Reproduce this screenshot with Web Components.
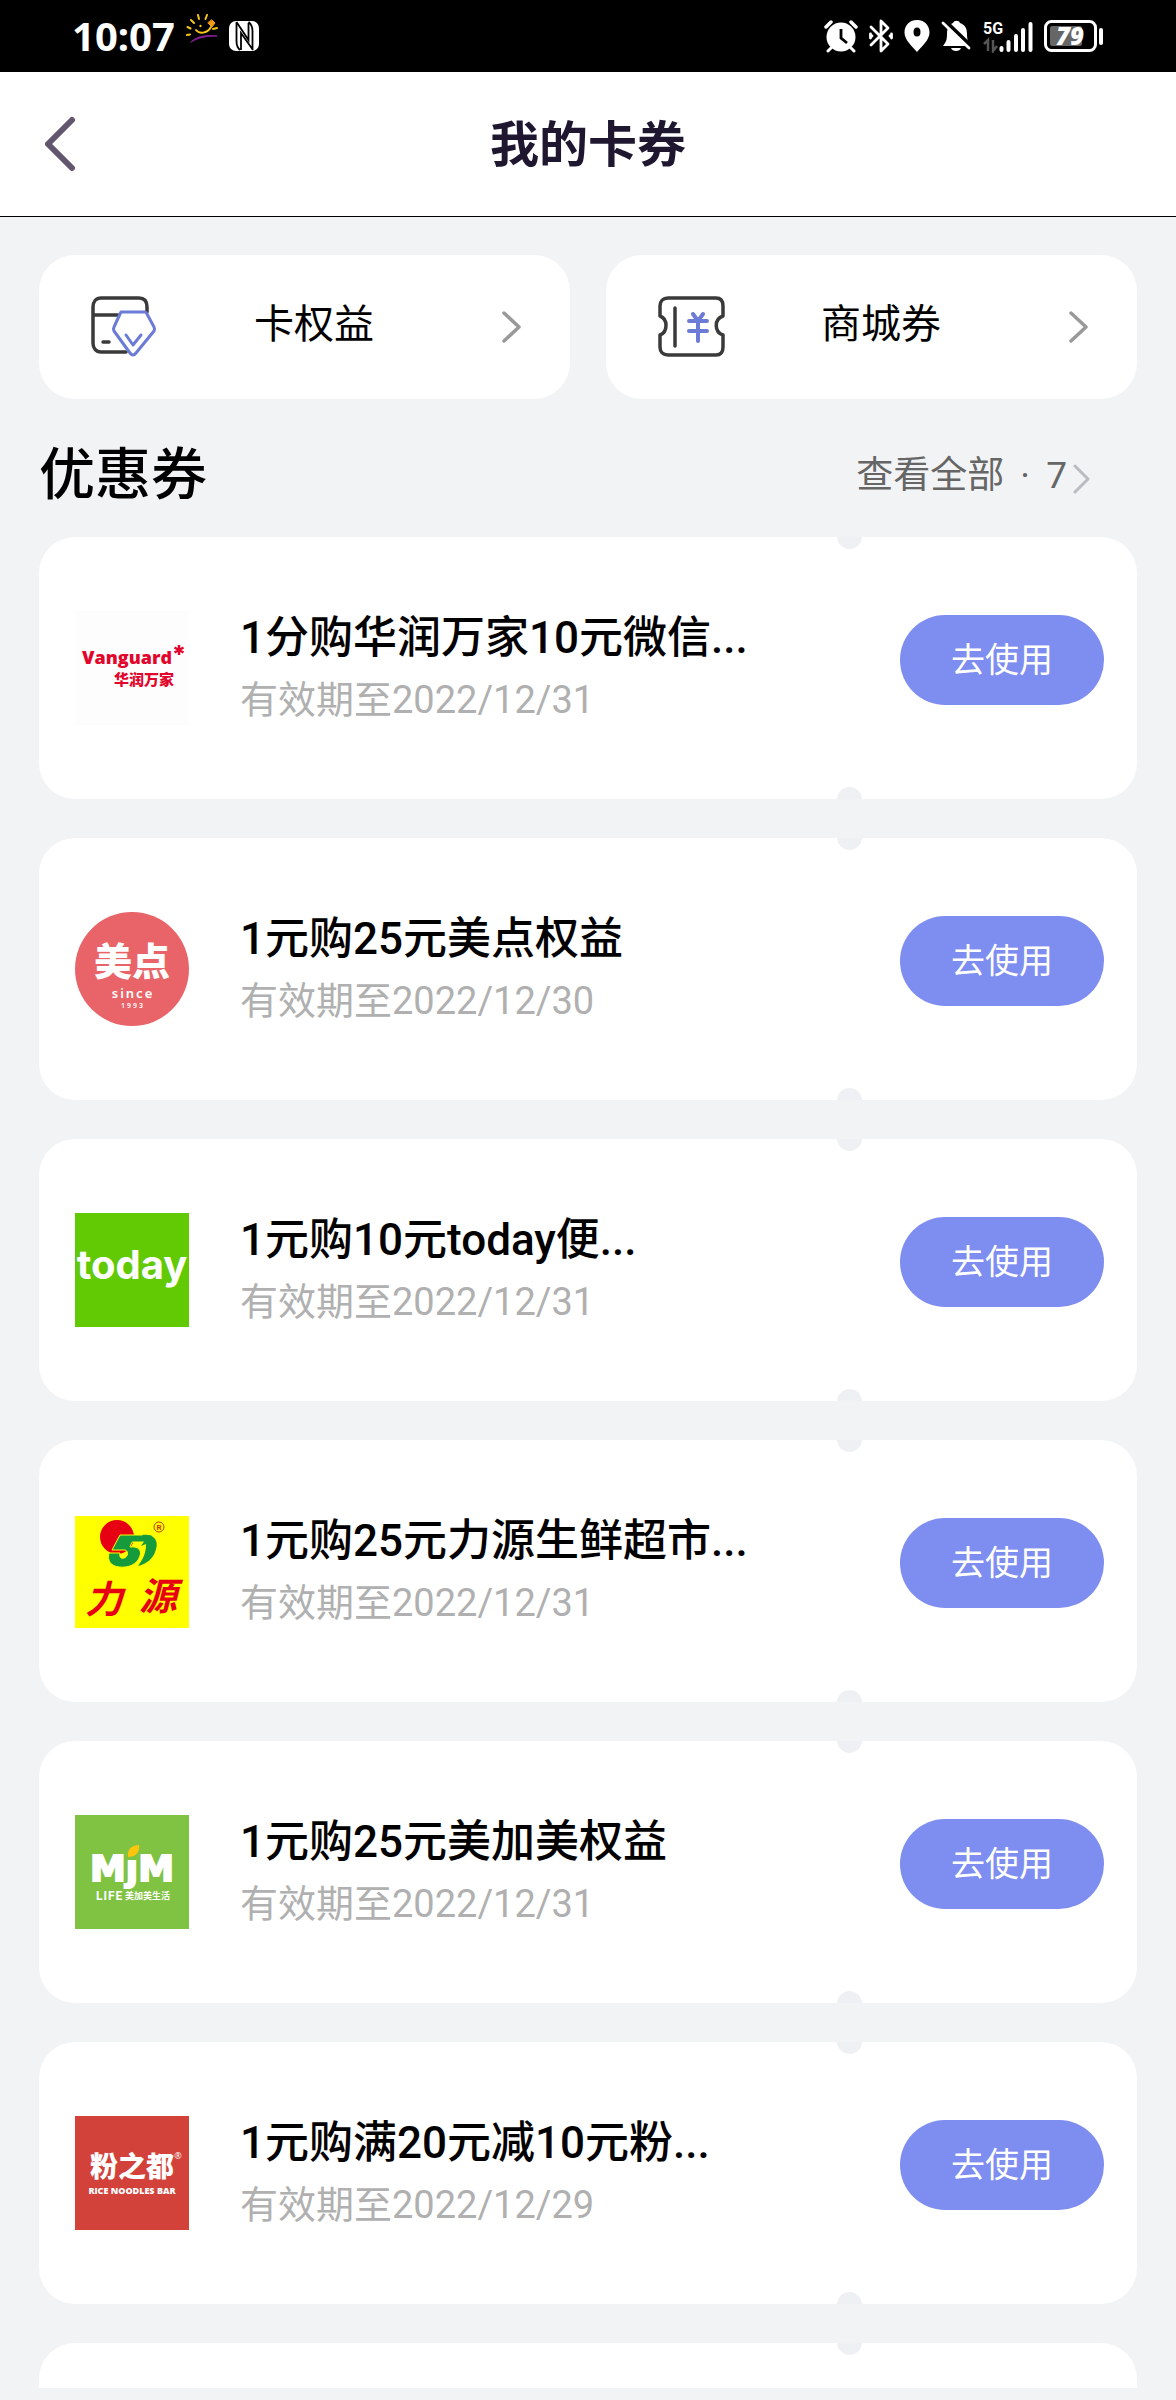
<!DOCTYPE html>
<html lang="zh-CN">
<head>
<meta charset="utf-8">
<meta name="viewport" content="width=device-width">
<title>我的卡券</title>
<style>
html,body{margin:0;height:100%}
body{background:#f2f3f5;color:#000;font-family:Roboto,"Noto Sans CJK SC",sans-serif}
</style>
</head>
<body>
<wallet-page></wallet-page>

<template id="status-bar">
<style>
:host{display:flex;align-items:center;justify-content:space-between;height:72px;padding:0 73px 0 72px;box-sizing:border-box;background:#000;color:#fff;flex:none}
.side{display:flex;align-items:center}
.left{gap:11px}
.right{gap:11px}
time{font:700 40px/72px "Noto Sans",sans-serif}
svg{display:block;flex:none}
.sun{margin-bottom:14px}
</style>
<div class="side left">
<time>10:07</time>
<svg class="sun" width="32" height="30" viewBox="0 0 32 30" fill="none" stroke="#f5c518" stroke-width="2" stroke-linecap="round"><path d="M1 21l3-.500M1.500 13l3 1.500M5 6l3 3M12 1l1 4M21 1l-1.500 4M27 15l4-1"/><path d="M10 16c3 4 11 4 15-3"/><path d="M22 9l4 4 3-4-3-3z" fill="#f59d18" stroke="#f59d18" stroke-width="1"/><circle cx="14.500" cy="12" r="1.200" fill="#f5c518" stroke="none"/><path d="M5 28c6-6 14-7 26-6-9 0-18 1-26 6z" fill="#8a1f9c" stroke="#8a1f9c" stroke-width="1"/></svg>
<svg width="30" height="30" viewBox="0 0 30 30"><rect width="30" height="30" rx="7" fill="#fff"/><path d="M7.500 1v19q0 6 3.500 9M12 29V12l12 17M7.500 1l12 18V2M19.500 1q4 3 4 9v19" fill="none" stroke="#000" stroke-width="1.800"/></svg>
</div>
<div class="side right">
<svg width="34" height="34" viewBox="0 0 34 34"><circle cx="17" cy="18" r="14.500" fill="#fff"/><path d="M2 8l5-5M32 8l-5-5" stroke="#fff" stroke-width="3.500" stroke-linecap="round"/><path d="M7 29l-3 3M27 29l3 3" stroke="#fff" stroke-width="3" stroke-linecap="round"/><path d="M17 10v9l6 5" fill="none" stroke="#000" stroke-width="2.800"/></svg>
<svg width="24" height="34" viewBox="0 0 24 34" fill="none" stroke="#fff" stroke-width="2.800" stroke-linejoin="round" stroke-linecap="round"><path d="M2 8l17 17-7 7V2l7 7L2 26"/><path d="M1.500 15v4M22.500 15v4M21 17h1M2 17h1"/></svg>
<svg width="26" height="32" viewBox="0 0 26 32"><path d="M13 0C5 0 .500 6 .500 12.500.500 20 8 26 13 32c5-6 12.500-12 12.500-19.500C25.500 6 21 0 13 0z" fill="#fff"/><ellipse cx="13" cy="12" rx="3.500" ry="4.500" fill="#000"/></svg>
<svg width="31" height="32" viewBox="0 0 31 32"><path d="M2 26c3-4 4-6 4-12C6 7 9 4 12 3c1-3 6-3 7 0 5 2 7 5 7 11s1 8 3 12z" fill="#fff"/><path d="M10 28h10c-1 4-9 4-10 0z" fill="#fff"/><path d="M2 -1l29 28" stroke="#000" stroke-width="4"/><path d="M2 3l26 25" stroke="#fff" stroke-width="2.800" stroke-linecap="round"/></svg>
<svg width="50" height="34" viewBox="0 0 50 34"><text x="0" y="15" fill="#fff" font-family="Liberation Sans Narrow,Roboto,sans-serif" font-weight="700" font-size="16">5G</text><path d="M1 25l4-4v11M10 21v11l4-5" fill="none" stroke="#555" stroke-width="2.500"/><path d="M18.500 29v2M25.500 23v8M33 17v14M40 11v20M47.500 5v26" stroke="#fff" stroke-width="4" stroke-linecap="round"/></svg>
<svg width="59" height="32" viewBox="0 0 59 32"><rect x="1.500" y="1.500" width="50" height="29" rx="6" fill="none" stroke="#fff" stroke-width="3"/><rect x="6" y="6" width="32" height="20" rx="2" fill="#666"/><text x="26" y="25" text-anchor="middle" fill="#fff" font-family="Open Sans,sans-serif" font-weight="800" font-style="italic" font-size="24">79</text><rect x="55" y="8" width="4" height="17" rx="2" fill="#fff"/></svg>
</div>
</template>

<template id="nav-header">
<style>
:host{display:grid;grid-template-columns:1fr auto 1fr;align-items:center;height:145px;box-sizing:border-box;padding:0 39px;background:#fff;border-bottom:1px solid #000;flex:none}
button{border:0;background:none;padding:0 0 0 6px;justify-self:start;display:flex}
h1{margin:0;padding-top:4px;font-size:49px;line-height:72px;font-weight:600;color:#1f1730}
</style>
<button aria-label="返回"><svg width="32" height="56" viewBox="0 0 32 56" fill="none" stroke="#62566f" stroke-width="6" stroke-linecap="round" stroke-linejoin="round"><path d="M27 4L3 28l24 24"/></svg></button>
<h1><slot></slot></h1>
</template>

<template id="entry-link">
<style>
:host{display:block;flex:1}
a{display:flex;align-items:center;height:144px;box-sizing:border-box;padding:0 48px 0 51px;background:#fff;border-radius:36px;color:#000;text-decoration:none}
span{flex:1;text-align:center;font-size:40px;line-height:60px;padding:0 32px 4px 0}
svg{display:block;flex:none}
</style>
<a href="#"><slot name="icon"></slot><span><slot></slot></span><svg width="20" height="32" viewBox="0 0 20 32" fill="none" stroke="#999" stroke-width="3.500" stroke-linecap="round" stroke-linejoin="round"><path d="M2 2l15 14L2 30"/></svg></a>
</template>

<template id="section-head">
<style>
:host{display:flex;align-items:center;justify-content:space-between;height:138px;padding:14px 46px 0 0;box-sizing:border-box}
h2{margin:0;font-size:56px;line-height:84px;font-weight:500}
a{display:flex;align-items:center;gap:6px;padding-top:2px;font-size:37px;line-height:56px;color:#666;text-decoration:none}
svg{margin-top:6px}
</style>
<h2><slot></slot></h2>
<a href="#"><slot name="more"></slot><svg width="18" height="30" viewBox="0 0 18 30" fill="none" stroke="#bbbcc2" stroke-width="3" stroke-linecap="round" stroke-linejoin="round"><path d="M2 2l13 13L2 28"/></svg></a>
</template>

<template id="coupon-card">
<style>
:host{display:flex;position:relative;align-items:center;gap:51px;height:262px;box-sizing:border-box;padding:0 33px 0 36px;background:#fff;border-radius:36px;overflow:hidden;flex:none}
:host::before,:host::after{content:"";position:absolute;right:275px;width:25px;height:25px;border-radius:50%;background:#eff0f3}
:host::before{top:-13px}
:host::after{bottom:-13px}
.logo{width:114px;height:114px;flex:none}
.text{flex:1;min-width:0;padding-top:2px}
h3{margin:0;font-size:44px;line-height:62px;font-weight:500;white-space:nowrap}
p{margin:0;font-size:38px;line-height:62px;color:#b0b0b0;white-space:nowrap}
button{flex:none;width:204px;height:90px;margin-bottom:16px;padding:0;border:0;border-radius:45px;background:#7e8df0;color:#fff;font-family:inherit;font-size:34px;line-height:50px;font-weight:400}
:host([peek]) .logo,:host([peek]) .text,:host([peek]) button{display:none}
</style>
<div class="logo"><slot name="logo"></slot></div>
<div class="text"><h3><slot></slot></h3><p><slot name="date"></slot></p></div>
<button>去使用</button>
</template>

<template id="brand-logo">
<style>:host{display:block;width:114px;height:114px}svg{display:block}</style>
</template>

<template id="wallet-page">
<style>
:host{display:flex;flex-direction:column;height:100vh;box-sizing:border-box;padding-bottom:12px;overflow:hidden}
main{flex:1;min-height:0;overflow:hidden;padding:38px 39px 0}
.entries{display:flex;gap:36px}
.list{display:flex;flex-direction:column;gap:39px}
entry-link svg{display:block;flex:none}
.dot{margin:0 7px}
</style>
<status-bar></status-bar>
<nav-header>我的卡券</nav-header>
<main>
<div class="entries">
<entry-link><svg slot="icon" width="68" height="62" viewBox="0 0 68 62" fill="none" stroke="#3a3a3a" stroke-width="3.500" stroke-linecap="round" stroke-linejoin="round"><path d="M36 56H11c-5 0-8-4-8-9V11c0-5 3-9 8-9h38c6 0 8 4 8 9v5M3 19h25M13 46h6"/><path d="M31 16h24q1 0 2 2l7 13q1 2 0 4L46 57q-3 4-6 0L24 35q-1-2 0-4l6-13z" stroke="#6b7bd6" stroke-width="3"/><path d="M36 39l7 10 8-10" stroke="#6b7bd6" stroke-width="3"/></svg>卡权益</entry-link>
<entry-link><svg slot="icon" width="68" height="62" viewBox="0 0 68 62" fill="none" stroke="#3a3a3a" stroke-width="3.500" stroke-linecap="round" stroke-linejoin="round"><path d="M11 2h48c5 0 7 3 7 8v10c-9 3-9 16 0 19v12c0 5-2 8-7 8H11c-5 0-8-3-8-8V39c8-3 8-16 0-19V10c0-5 3-8 8-8zM18 12v38"/><path d="M36 18l5 7 5-7M32 25h18M32 35h18M41 25v20" stroke="#6b7bd6" stroke-width="4"/></svg>商城券</entry-link>
</div>
<section-head>优惠券<span slot="more">查看全部 <span class="dot">·</span> 7</span></section-head>
<div class="list">
<coupon-card><brand-logo slot="logo" name="vanguard"></brand-logo>1分购华润万家10元微信...<span slot="date">有效期至2022/12/31</span></coupon-card>
<coupon-card><brand-logo slot="logo" name="meidian"></brand-logo>1元购25元美点权益<span slot="date">有效期至2022/12/30</span></coupon-card>
<coupon-card><brand-logo slot="logo" name="today"></brand-logo>1元购10元today便...<span slot="date">有效期至2022/12/31</span></coupon-card>
<coupon-card><brand-logo slot="logo" name="liyuan"></brand-logo>1元购25元力源生鲜超市...<span slot="date">有效期至2022/12/31</span></coupon-card>
<coupon-card><brand-logo slot="logo" name="mjm"></brand-logo>1元购25元美加美权益<span slot="date">有效期至2022/12/31</span></coupon-card>
<coupon-card><brand-logo slot="logo" name="fenzhidu"></brand-logo>1元购满20元减10元粉...<span slot="date">有效期至2022/12/29</span></coupon-card>
<coupon-card peek></coupon-card>
</div>
</main>
</template>

<script>
const CJK = 'font-family="Noto Sans CJK SC,sans-serif"';
const logos = {
  vanguard: `<rect width="114" height="114" fill="#fefdfd"/>
    <g fill="#e2062c"><text x="7" y="53" font-family="Open Sans,sans-serif" font-weight="800" font-size="18">Vanguard</text>
    <text x="39" y="74" ${CJK} font-weight="900" font-size="15">华润万家</text></g>
    <path d="M104 34v10M99.500 36.500l9 5M108.500 36.500l-9 5" stroke="#e2062c" stroke-width="2.500"/>`,
  meidian: `<circle cx="57" cy="57" r="57" fill="#e96468"/>
    <g fill="#fff"><text x="19" y="63" ${CJK} font-weight="900" font-size="38">美点</text>
    <g text-anchor="middle" font-family="Noto Sans,sans-serif"><text x="58" y="86" font-weight="600" font-size="13" letter-spacing="2">since</text>
    <text x="58" y="96" font-weight="600" font-size="7" letter-spacing="2">1993</text></g></g>`,
  today: `<rect width="114" height="114" fill="#62c905"/>
    <text x="57" y="66" text-anchor="middle" fill="#fff" font-family="Inter,sans-serif" font-weight="700" font-size="40">today</text>`,
  liyuan: `<rect y="2" width="114" height="112" fill="#ff0"/>
    <circle cx="42" cy="23" r="17" fill="#e60012"/>
    <path d="M45 21h32l-2 7H57l-2 5c8-1 12 3 10 9-3 9-12 12-21 11-8-1-12-6-10-14h11c-1 4 1 6 4 5 4-1 5-7 1-8H37z" fill="#159a3c" stroke="#ff0"/>
    <path d="M67 21c11-2 17 5 14 14-2 9-9 15-18 17 6-8 8-14 8-22l-5 2 6-9 5 8-4-1" fill="#159a3c"/>
    <circle cx="84" cy="13" r="5" fill="none" stroke="#c33b00"/><text x="84" y="16" text-anchor="middle" font-family="Roboto,sans-serif" font-weight="700" fill="#c33b00" font-size="8">R</text>
    <g fill="#e60012" ${CJK} font-weight="700" font-style="italic" font-size="38"><text x="10" y="99">力</text><text x="64" y="96">源</text></g>`,
  mjm: `<rect width="114" height="114" fill="#80c342"/>
    <path d="M53 42c-1-8 4-12 11-12 1 8-4 12-11 12z" fill="#fdc50c"/>
    <text x="57" y="66" text-anchor="middle" fill="#fff" stroke="#fff" stroke-width="2" font-family="DejaVu Sans,sans-serif" font-weight="700" font-size="36">MȷM</text>
    <g fill="#fff" font-weight="700"><text x="21" y="85" font-family="Roboto,sans-serif" font-size="12" letter-spacing="1">LIFE</text><text x="50" y="84" ${CJK} font-size="9">美加美生活</text></g>`,
  fenzhidu: `<rect width="114" height="114" fill="#d2413a"/>
    <g fill="#fff"><text x="15" y="61" ${CJK} font-weight="900" font-size="28">粉之都</text>
    <text x="103" y="43" text-anchor="middle" font-family="Open Sans,sans-serif" font-size="9">®</text>
    <text x="57" y="78" text-anchor="middle" font-family="Open Sans,sans-serif" font-weight="800" font-size="9">RICE NOODLES BAR</text></g>`
};
class Templated extends HTMLElement {
  constructor() {
    super();
    this.attachShadow({mode: 'open'}).append(document.getElementById(this.localName).content.cloneNode(true));
  }
}
for (const tag of ['status-bar', 'nav-header', 'entry-link', 'section-head', 'coupon-card'])
  customElements.define(tag, class extends Templated {});
customElements.define('brand-logo', class extends Templated {
  connectedCallback() {
    if (this.shadowRoot.querySelector('svg')) return;
    this.shadowRoot.querySelector('style').insertAdjacentHTML('afterend',
      `<svg width="114" height="114" viewBox="0 0 114 114">${logos[this.getAttribute('name')]}</svg>`);
  }
});
customElements.define('wallet-page', class extends Templated {});
</script>
</body>
</html>
